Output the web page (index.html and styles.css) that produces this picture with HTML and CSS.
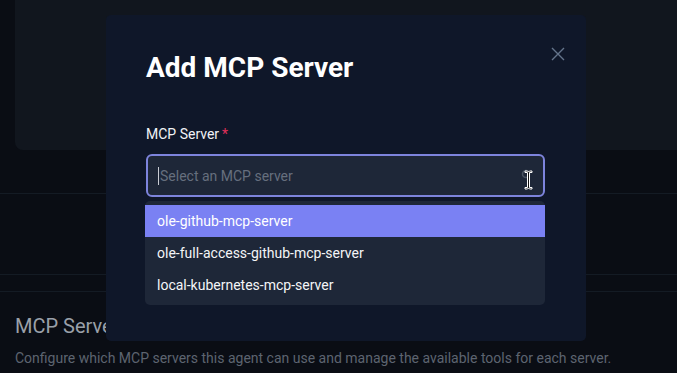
FILE: index.html
```html
<!DOCTYPE html>
<html lang="en">
<head>
    <meta charset="UTF-8">
    <meta name="viewport" content="width=device-width, initial-scale=1.0">
    <title>Add MCP Server</title>
    <link rel="stylesheet" href="styles.css">
</head>
<body>
    <div class="page">
        <div class="top-card"></div>
        <div class="row row-a"></div>
        <div class="row row-b"></div>
        <div class="row row-c"></div>
        <section class="servers">
            <h2>MCP Servers</h2>
            <p>Configure which MCP servers this agent can use and manage the available tools for each server.</p>
        </section>
    </div>

    <div class="modal">
        <button class="close" aria-label="Close">
            <svg width="14" height="14" viewBox="0 0 14 14"><path d="M1 1L13 13M13 1L1 13" stroke="#64748b" stroke-width="1.4" fill="none"/></svg>
        </button>
        <h1>Add MCP Server</h1>
        <label for="server">MCP Server<span class="req">*</span></label>
        <div class="select">
            <span class="caret"></span>
            <span class="placeholder">Select an MCP server</span>
            <svg class="cursor" width="14" height="22" viewBox="0 0 14 22">
                <circle cx="5" cy="5" r="3.5" fill="none" stroke="#4b5563" stroke-width="1.5"/>
                <path d="M4 2h2.5l1 1 1-1H11v1.5H8.5v15H11V20H8.5l-1-1-1 1H4v-1.5h2.5v-15H4z" fill="#111" stroke="#fff" stroke-width="1"/>
            </svg>
        </div>
        <ul class="options">
            <li class="active">ole-github-mcp-server</li>
            <li>ole-full-access-github-mcp-server</li>
            <li>local-kubernetes-mcp-server</li>
        </ul>
    </div>
</body>
</html>
```

FILE: styles.css
```css
body {
    margin: 0;
    background-color: #0a0d14;
    font-family: Roboto, "Liberation Sans", sans-serif;
    overflow: hidden;
}
.page {
    height: 373px;
}
.top-card {
    margin-left: 15px;
    height: 150px;
    background-color: #11161e;
    border-bottom-left-radius: 8px;
}
.row {
    border-bottom: 1px solid #141b24;
}
.row-a {
    height: 43px;
}
.row-b {
    height: 80px;
}
.row-c {
    height: 16px;
}
.servers {
    padding: 0 15px;
}
.servers h2 {
    margin: 21px 0 0;
    font-size: 20px;
    font-weight: 400;
    line-height: 26px;
    color: #9aa0a9;
}
.servers p {
    margin: 9px 0 0;
    font-size: 14px;
    line-height: 20px;
    color: #5d6470;
}
.modal {
    position: absolute;
    left: 106px;
    top: 15px;
    width: 480px;
    height: 326px;
    box-sizing: border-box;
    padding: 35px 41px 0 40px;
    background-color: #0f1729;
    border-radius: 5px;
}
.close {
    position: absolute;
    top: 32px;
    right: 21px;
    padding: 0;
    border: none;
    background: none;
    line-height: 0;
}
.modal h1 {
    margin: 0;
    font-size: 28px;
    line-height: 36px;
    font-weight: 700;
    color: #fff;
}
.modal label {
    display: block;
    margin-top: 38px;
    font-size: 14px;
    line-height: 20px;
    color: #f1f3f6;
}
.req {
    color: #e0305a;
    margin-left: 3px;
}
.select {
    display: flex;
    align-items: center;
    margin-top: 10px;
    height: 43px;
    box-sizing: border-box;
    padding: 0 10px;
    border: 2px solid #7d84dc;
    border-radius: 6px;
    background-color: #1e2738;
}
.caret {
    width: 1px;
    height: 18px;
    margin-right: 1px;
    background-color: #c9ccd4;
}
.placeholder {
    flex: 1;
    font-size: 14px;
    color: #666f7e;
}
.cursor {
    margin-right: -2px;
    margin-top: 8px;
}
.options {
    list-style: none;
    margin: 4px 0 0 -1px;
    padding: 4px 0;
    background-color: #1e2738;
    border-radius: 5px;
}
.options li {
    height: 32px;
    line-height: 32px;
    padding: 0 12px;
    font-size: 14px;
    color: #f4f5f7;
}
.options li.active {
    background-color: #7a81f3;
    color: #fff;
}
```
